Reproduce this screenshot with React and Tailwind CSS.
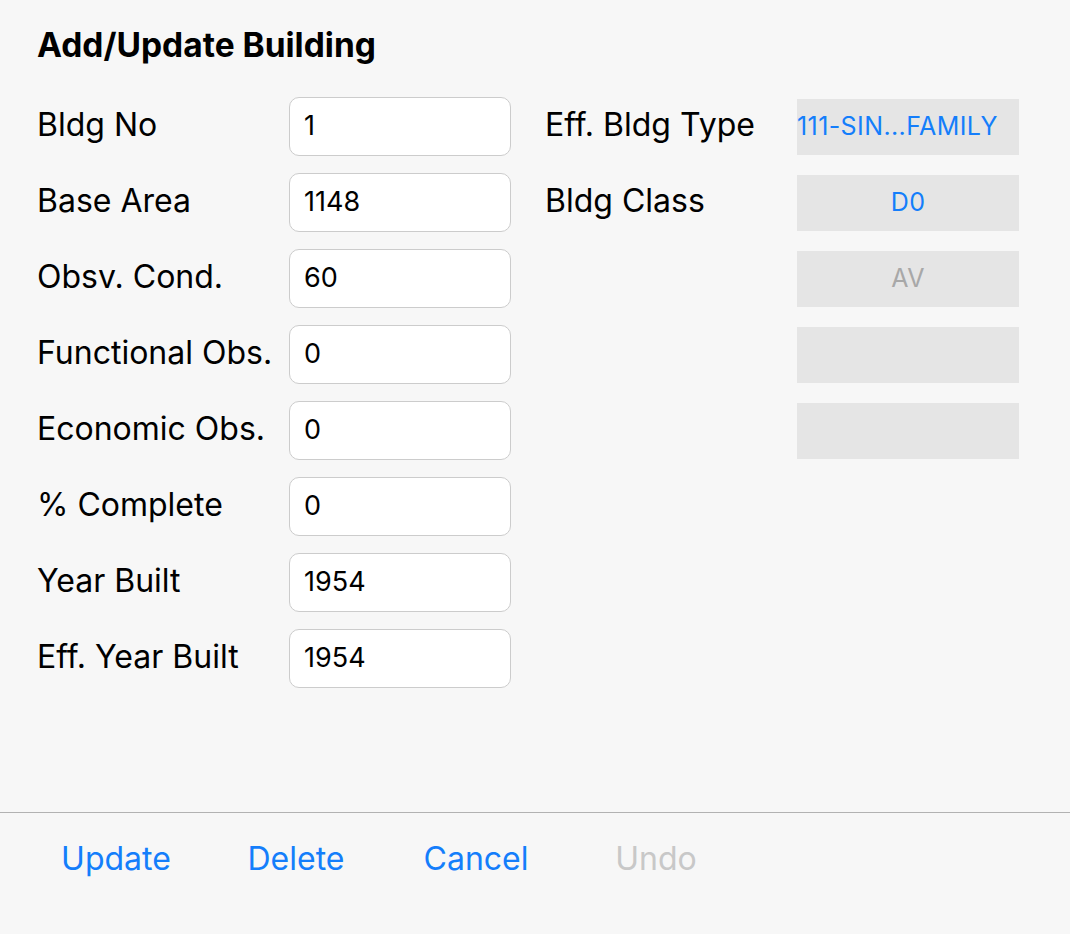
import React from 'react';

const leftRows = [
  { label: 'Bldg No', value: '1' },
  { label: 'Base Area', value: '1148' },
  { label: 'Obsv. Cond.', value: '60' },
  { label: 'Functional Obs.', value: '0' },
  { label: 'Economic Obs.', value: '0' },
  { label: '% Complete', value: '0' },
  { label: 'Year Built', value: '1954' },
  { label: 'Eff. Year Built', value: '1954' },
];

const rightRows = [
  { label: 'Eff. Bldg Type', value: '111-SIN...FAMILY', tone: 'blue', align: 'left' },
  { label: 'Bldg Class', value: 'D0', tone: 'blue' },
  { label: '', value: 'AV', tone: 'gray' },
  { label: '', value: '' },
  { label: '', value: '' },
];

function FieldRow({ label, value }) {
  return (
    <div className="flex items-center h-[59px]">
      <div className="w-[252px] text-[32px] leading-none text-black pb-[4px] whitespace-nowrap">{label}</div>
      <div className="w-[222px] h-[59px] bg-white border border-[#cccccc] rounded-[10px] flex items-center pl-[14px] text-[27px] text-black">
        {value}
      </div>
    </div>
  );
}

function PickerRow({ label, value, tone, align }) {
  return (
    <div className="flex items-center h-[59px]">
      <div className="w-[252px] text-[32px] leading-none text-black pb-[4px] whitespace-nowrap">{label}</div>
      <div
        className={
          'w-[222px] h-[56px] bg-[#e5e5e5] flex items-center text-[25px] tracking-[0.4px] whitespace-nowrap overflow-hidden ' +
          (align === 'left' ? 'justify-start ' : 'justify-center ') +
          (tone === 'gray' ? 'text-[#a8a8a8]' : 'text-[#147efb]')
        }
      >
        {value}
      </div>
    </div>
  );
}

export default function App() {
  return (
    <div className="w-[1070px] h-[934px] bg-[#f7f7f7] flex flex-col font-['Inter',sans-serif]">
      <div className="flex-1 px-[37px] pt-[26px]">
        <h1 className="text-[33.5px] font-bold text-black leading-[38px]">Add/Update Building</h1>
        <div className="flex gap-[34px] mt-[33px]">
          <div className="flex flex-col gap-[17px]">
            {leftRows.map((r) => (
              <FieldRow key={r.label} {...r} />
            ))}
          </div>
          <div className="flex flex-col gap-[17px]">
            {rightRows.map((r, i) => (
              <PickerRow key={i} {...r} />
            ))}
          </div>
        </div>
      </div>
      <div className="h-[122px] border-t border-[#b2b2b2] flex items-start px-[26px] pt-[26px]">
        {['Update', 'Delete', 'Cancel', 'Undo'].map((b) => (
          <button
            key={b}
            className={
              'w-[180px] text-center text-[32px] leading-[40px] ' +
              (b === 'Undo' ? 'text-[#c8c8c8]' : 'text-[#147efb]')
            }
          >
            {b}
          </button>
        ))}
      </div>
    </div>
  );
}
